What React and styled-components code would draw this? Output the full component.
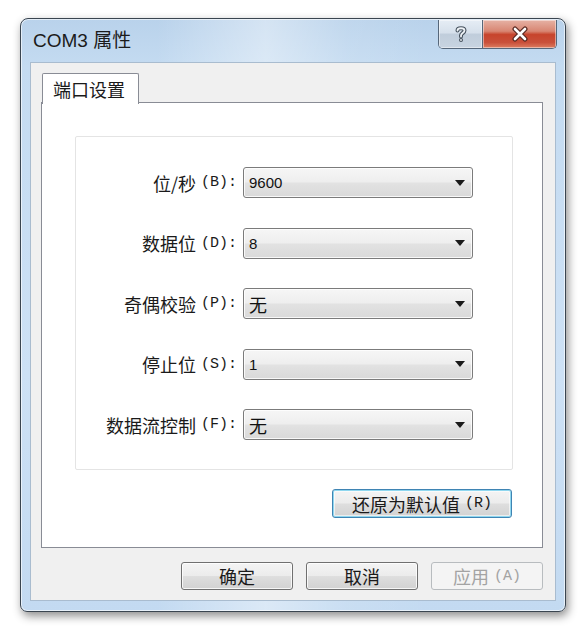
import React from "react";
import styled, { createGlobalStyle } from "styled-components";

const GlobalStyle = createGlobalStyle`
  html, body { margin: 0; padding: 0; background: #ffffff; }
  body { font-family: "Noto Sans CJK SC", "Liberation Sans", sans-serif; }
  * { box-sizing: border-box; }
`;

const Stage = styled.div`
  width: 585px;
  height: 630px;
  padding: 18px 0 0 20px;
  background: #ffffff;
`;

const Window = styled.div`
  width: 546px;
  height: 594px;
  display: flex;
  flex-direction: column;
  padding: 0 9px 10px 9px;
  border: 1px solid #3a4550;
  border-radius: 8px 8px 7px 7px;
  background:
    linear-gradient(90deg, rgba(255,255,255,0) 25%, rgba(255,255,255,0.4) 45%, rgba(255,255,255,0.1) 60%, rgba(255,255,255,0) 75%),
    linear-gradient(180deg, #b9d2eb 0%, #c4dbf1 8%, #cde1f5 60%, #c3daf1 100%);
  box-shadow: 2px 4px 10px rgba(0, 0, 0, 0.45), inset 0 0 0 1px rgba(255,255,255,0.6);
`;

const TitleBar = styled.div`
  height: 43px;
  display: flex;
  align-items: flex-start;
  justify-content: space-between;
`;

const Title = styled.div`
  margin-top: 11px;
  padding-left: 3px;
  font-family: "Liberation Sans", "Noto Sans CJK SC", sans-serif;
  font-size: 19px;
  line-height: 22px;
  color: #1b1b1b;
`;

const CaptionGroup = styled.div`
  display: flex;
  margin-top: 1px;
  border: 1px solid #56677a;
  border-top: none;
  border-radius: 0 0 5px 5px;
  overflow: hidden;
  height: 29px;
  margin-right: -1px;
`;

const CaptionButton = styled.div`
  width: ${(p) => p.$w}px;
  height: 28px;
  display: flex;
  align-items: center;
  justify-content: center;
  background: ${(p) =>
    p.$close
      ? "linear-gradient(180deg, #e6b2a5 0%, #d88672 40%, #c7442c 52%, #c9503a 80%, #dd7d60 100%)"
      : "linear-gradient(180deg, #e6edf5 0%, #d6e0eb 45%, #c0cddb 52%, #c8d4e1 100%)"};
  border-left: ${(p) => (p.$close ? "1px solid #56677a" : "none")};
  box-shadow: inset 0 0 0 1px rgba(255, 255, 255, 0.45);
`;

const Client = styled.div`
  flex: 1;
  display: flex;
  flex-direction: column;
  background: #f0f0f0;
  border: 1px solid #a9bccf;
  padding: 10px 12px 0 10px;
`;

const TabStrip = styled.div`
  display: flex;
  height: 30px;
  position: relative;
  z-index: 1;
  margin-bottom: -1px;
`;

const Tab = styled.div`
  width: 97px;
  height: 31px;
  margin-left: 1px;
  background: #ffffff;
  border: 1px solid #898c95;
  border-bottom: none;
  border-radius: 2px 2px 0 0;
  font-size: 18px;
  color: #1a1a1a;
  padding: 3px 0 0 10px;
  line-height: 24px;
`;

const TabPage = styled.div`
  height: 446px;
  background: #ffffff;
  border: 1px solid #898c95;
  padding: 33px 29px 0 33px;
  display: flex;
  flex-direction: column;
`;

const GroupBox = styled.div`
  border: 1px solid #e4e4e4;
  border-radius: 2px;
  padding: 30px 39px 29px 0;
  display: grid;
  grid-template-columns: 1fr 230px;
  grid-auto-rows: 31px;
  column-gap: 6px;
  row-gap: 29.5px;
  align-items: center;
`;

const Label = styled.div`
  height: 31px;
  display: flex;
  align-items: center;
  justify-content: flex-end;
  font-size: 18px;
  color: #1a1a1a;
  white-space: nowrap;
  line-height: 1;
`;

const Key = styled.span`
  font-family: "Liberation Mono", monospace;
  font-size: 15px;
  margin-left: 5px;
  line-height: 1;
`;

const Combo = styled.div`
  height: 31px;
  border: 1px solid #7b7b7b;
  border-radius: 3px;
  background: linear-gradient(180deg, #f6f6f6 0%, #eeeeee 48%, #e2e2e2 52%, #d9d9d9 100%);
  box-shadow: inset 0 0 0 1px rgba(255, 255, 255, 0.8);
  display: flex;
  align-items: center;
  justify-content: space-between;
  padding: 0 6px 0 5px;
`;

const ComboValue = styled.span`
  font-family: ${(p) => (p.$cjk ? '"Noto Sans CJK SC", sans-serif' : '"Liberation Sans", sans-serif')};
  font-size: ${(p) => (p.$cjk ? 18 : 15)}px;
  color: #111;
  line-height: 1;
`;

const Arrow = styled.span`
  width: 0;
  height: 0;
  border-left: 5.5px solid transparent;
  border-right: 5.5px solid transparent;
  border-top: 6px solid #1a1a1a;
  margin-right: 1px;
`;

const RestoreRow = styled.div`
  display: flex;
  justify-content: flex-end;
  margin-top: 19px;
  padding-right: 1px;
`;

const Button = styled.div`
  width: ${(p) => p.$w}px;
  height: ${(p) => p.$h || 28}px;
  display: flex;
  align-items: center;
  justify-content: center;
  border-radius: 3px;
  font-size: 18px;
  line-height: 1;
  white-space: nowrap;
  color: ${(p) => (p.$disabled ? "#a3a3a3" : "#1a1a1a")};
  border: 1px solid ${(p) => (p.$focus ? "#3f84b3" : p.$disabled ? "#b8bcbf" : "#707070")};
  background: ${(p) =>
    p.$disabled
      ? "#f4f4f4"
      : "linear-gradient(180deg, #f4f4f4 0%, #ececec 48%, #dedede 52%, #d2d2d2 100%)"};
  box-shadow: ${(p) =>
    p.$focus
      ? "inset 0 0 0 1px #8fd7ef, inset 0 0 0 2px rgba(255,255,255,0.6)"
      : p.$disabled
      ? "none"
      : "inset 0 0 0 1px rgba(255,255,255,0.8)"};
`;

const Footer = styled.div`
  display: flex;
  justify-content: flex-end;
  gap: 13px;
  margin-top: 14px;
`;

const rows = [
  { label: "位/秒", key: "(B):", value: "9600" },
  { label: "数据位", key: "(D):", value: "8" },
  { label: "奇偶校验", key: "(P):", value: "无", cjk: true },
  { label: "停止位", key: "(S):", value: "1" },
  { label: "数据流控制", key: "(F):", value: "无", cjk: true },
];

function HelpIcon() {
  const d = "M3.5 5.5 C3.5 2.5 10.5 2.5 10.5 5.5 C10.5 8 7 8 7 10.5 L7 11.5";
  return (
    <svg width="14" height="18" viewBox="0 0 14 18">
      <path d={d} fill="none" stroke="#46525e" strokeWidth="4" strokeLinecap="round" />
      <path d={d} fill="none" stroke="#eef2f6" strokeWidth="1.8" strokeLinecap="round" />
      <circle cx="7" cy="15" r="2" fill="#46525e" />
      <circle cx="7" cy="15" r="0.9" fill="#eef2f6" />
    </svg>
  );
}

function CloseIcon() {
  return (
    <svg width="18" height="16" viewBox="0 0 18 16">
      <path d="M4 3 L14 13 M14 3 L4 13" stroke="#5a2a22" strokeWidth="5" strokeLinecap="round" />
      <path d="M4 3 L14 13 M14 3 L4 13" stroke="#ffffff" strokeWidth="2.6" strokeLinecap="round" />
    </svg>
  );
}

export default function App() {
  return (
    <>
      <GlobalStyle />
      <Stage>
        <Window>
          <TitleBar>
            <Title>COM3 属性</Title>
            <CaptionGroup>
              <CaptionButton $w={43}>
                <HelpIcon />
              </CaptionButton>
              <CaptionButton $w={74} $close>
                <CloseIcon />
              </CaptionButton>
            </CaptionGroup>
          </TitleBar>
          <Client>
            <TabStrip>
              <Tab>端口设置</Tab>
            </TabStrip>
            <TabPage>
              <GroupBox>
                {rows.map((r) => (
                  <React.Fragment key={r.label}>
                    <Label>
                      {r.label}
                      <Key>{r.key}</Key>
                    </Label>
                    <Combo>
                      <ComboValue $cjk={r.cjk}>{r.value}</ComboValue>
                      <Arrow />
                    </Combo>
                  </React.Fragment>
                ))}
              </GroupBox>
              <RestoreRow>
                <Button $w={180} $h={29} $focus>
                  还原为默认值<Key>(R)</Key>
                </Button>
              </RestoreRow>
            </TabPage>
            <Footer>
              <Button $w={112}>确定</Button>
              <Button $w={112}>取消</Button>
              <Button $w={112} $disabled>
                应用<Key>(A)</Key>
              </Button>
            </Footer>
          </Client>
        </Window>
      </Stage>
    </>
  );
}
